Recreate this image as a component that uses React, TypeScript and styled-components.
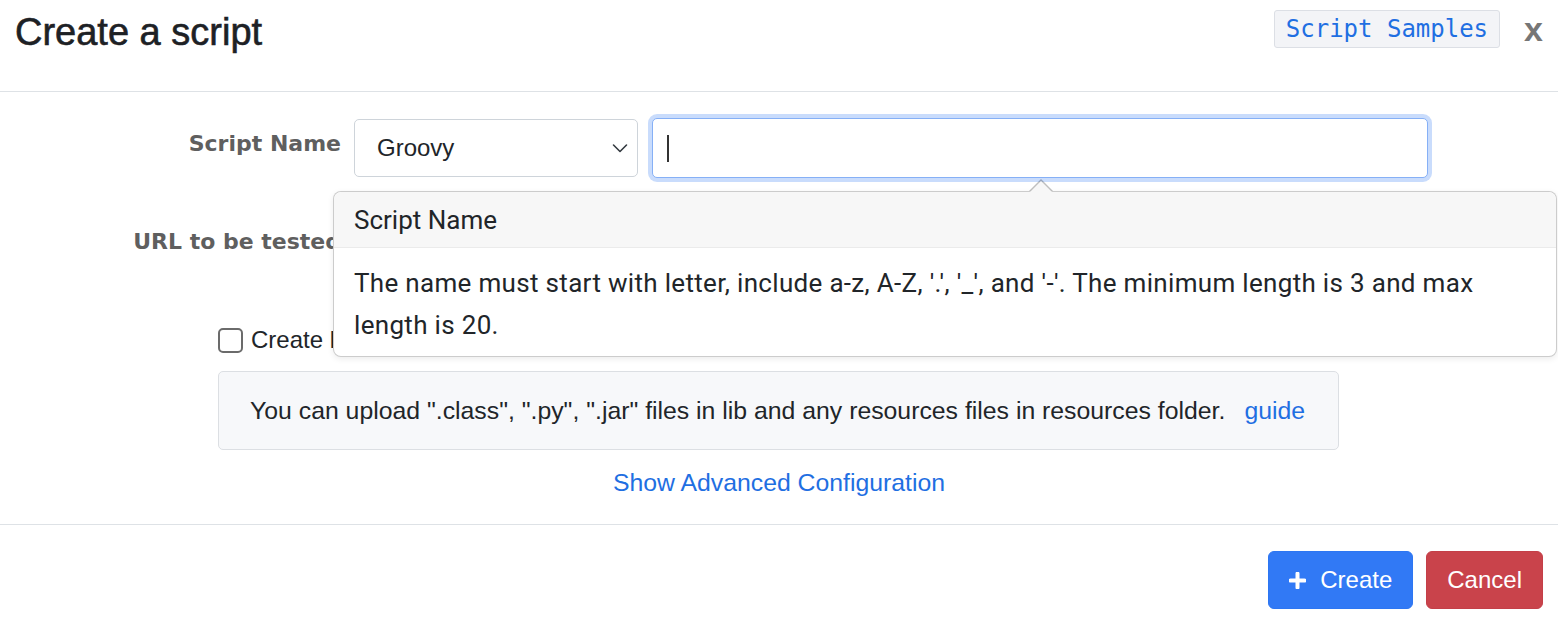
import { FC } from "react";
import styled, { createGlobalStyle } from "styled-components";

const GlobalStyle = createGlobalStyle`
  html, body {
    margin: 0;
    padding: 0;
    background: #fff;
  }
  body {
    font-family: "Liberation Sans", Arial, sans-serif;
    color: #212529;
  }
  * {
    box-sizing: border-box;
  }
`;

const ModalStyled = styled.div`
  width: 1558px;
  height: 622px;
  display: flex;
  flex-direction: column;
  background: #fff;
  overflow: hidden;
`;

const HeaderStyled = styled.header`
  height: 92px;
  flex: 0 0 92px;
  display: flex;
  align-items: flex-start;
  padding: 0 15px;
  border-bottom: 1px solid #dee2e6;

  & .title {
    margin: 10px 0 0;
    font-size: 38px;
    line-height: 44px;
    font-weight: 500;
    color: #1d2125;
    -webkit-text-stroke: 0.6px #1d2125;
    flex: 1;
  }
`;

const SamplesButton = styled.button`
  margin-top: 10px;
  height: 38px;
  padding: 0 11px;
  background: #f3f4f7;
  border: 1px solid #dcdfe5;
  border-radius: 3px;
  font-family: "DejaVu Sans Mono", "Liberation Mono", monospace;
  font-size: 24px;
  color: #1f6fe2;
  cursor: pointer;
`;

const CloseButton = styled.button`
  margin: 9px 0 0 24px;
  padding: 0;
  border: none;
  background: none;
  font-family: "Liberation Sans", Arial, sans-serif;
  font-weight: 700;
  font-size: 34px;
  line-height: 40px;
  color: #767676;
  cursor: pointer;
`;

const BodyStyled = styled.div`
  height: 433px;
  flex: 0 0 433px;
  display: flex;
  flex-direction: column;
  padding-top: 26px;
  border-bottom: 1px solid #dee2e6;
`;

const FormRow = styled.div<{ $top?: number }>`
  position: relative;
  display: flex;
  align-items: center;
  gap: 13px;
  height: 60px;
  margin-top: ${(p) => p.$top ?? 0}px;
`;

const Label = styled.label`
  flex: 0 0 341px;
  margin-bottom: 10px;
  text-align: right;
  font-family: "DejaVu Sans", Verdana, sans-serif;
  font-weight: 700;
  font-size: 22px;
  color: #5f5f5f;
  white-space: nowrap;
`;

const SelectBox = styled.div`
  width: 284px;
  height: 58px;
  display: flex;
  align-items: center;
  justify-content: space-between;
  padding: 0 8px 0 22px;
  border: 1px solid #ced4da;
  border-radius: 5px;
  font-size: 24px;
  color: #212529;
  background: #fff;
`;

const TextInput = styled.div<{ $focused?: boolean; $width: number }>`
  width: ${(p) => p.$width}px;
  height: 60px;
  margin-left: 1px;
  display: flex;
  align-items: center;
  padding: 0 14px;
  border: 1.5px solid ${(p) => (p.$focused ? "#86b0f6" : "#ced4da")};
  border-radius: 5px;
  background: #fff;
  box-shadow: ${(p) => (p.$focused ? "0 0 0 4px rgba(60, 130, 245, 0.28)" : "none")};

  & .caret {
    width: 2px;
    height: 27px;
    background: #333;
  }
`;

const Popover = styled.div`
  position: absolute;
  top: 73px;
  left: 333px;
  width: 1224px;
  background: #fff;
  border: 1px solid rgba(0, 0, 0, 0.2);
  border-radius: 8px;
  box-shadow: 0 2px 6px rgba(0, 0, 0, 0.08);
  font-family: Roboto, "Liberation Sans", sans-serif;
  color: #212529;
  z-index: 10;

  &::before,
  &::after {
    content: "";
    position: absolute;
    left: 695px;
    border-style: solid;
    border-color: transparent;
    border-width: 0 12px 12px 12px;
  }
  &::before {
    top: -13px;
    border-bottom-color: rgba(0, 0, 0, 0.25);
  }
  &::after {
    top: -11.5px;
    border-bottom-color: #f7f7f7;
  }

  & .head {
    height: 56px;
    display: flex;
    align-items: center;
    padding: 0 20px;
    background: #f7f7f7;
    border-bottom: 1px solid #ebebeb;
    border-radius: 8px 8px 0 0;
    font-size: 26px;
  }

  & .content {
    padding: 14px 20px 10px;
    font-size: 26px;
    line-height: 42px;
    letter-spacing: 0.32px;
  }
`;

const CheckRow = styled.label`
  display: flex;
  align-items: center;
  gap: 8px;
  margin: 49px 0 0 218px;
  height: 30px;
  font-size: 24px;
  color: #212529;

  & .box {
    width: 25px;
    height: 25px;
    border: 2px solid #6b6b6b;
    border-radius: 5px;
    background: #fff;
  }
`;

const InfoBox = styled.div`
  margin: 16px 0 0 218px;
  width: 1121px;
  height: 79px;
  display: flex;
  align-items: center;
  padding: 0 31px;
  background: #f7f8fa;
  border: 1px solid #dcdfe3;
  border-radius: 5px;
  font-size: 24.8px;
  color: #212529;

  & a {
    margin-left: 19px;
  }
`;

const LinkText = styled.a`
  color: #1f6fe2;
  text-decoration: none;
  cursor: pointer;
`;

const AdvancedLink = styled(LinkText)`
  align-self: center;
  margin-top: 18px;
  font-size: 24.8px;
  line-height: 30px;
`;

const FooterStyled = styled.footer`
  display: flex;
  justify-content: flex-end;
  gap: 13px;
  padding: 26px 15px 0;
`;

const Button = styled.button<{ $variant: "primary" | "danger" }>`
  height: 58px;
  display: flex;
  align-items: center;
  gap: 14px;
  padding: 0 20px;
  border: 1px solid ${(p) => (p.$variant === "primary" ? "#2d76f2" : "#c43f48")};
  border-radius: 6px;
  background: ${(p) => (p.$variant === "primary" ? "#3179f5" : "#c9434b")};
  color: #fff;
  font-family: "Liberation Sans", Arial, sans-serif;
  font-size: 24px;
  cursor: pointer;
`;

const PlusIcon: FC = () => (
  <svg width="17" height="17" viewBox="0 0 17 17">
    <path d="M6.5 1.5a2 2 0 0 1 4 0V6.5h5a2 2 0 0 1 0 4h-5v5a2 2 0 0 1-4 0v-5h-5a2 2 0 0 1 0-4h5z" fill="#fff" />
  </svg>
);

const Chevron: FC = () => (
  <svg width="18" height="18" viewBox="0 0 18 18">
    <path d="M2.5 6l6.5 6.5L15.5 6" fill="none" stroke="#343a40" strokeWidth="1.6" strokeLinecap="round" strokeLinejoin="round" />
  </svg>
);

const App: FC = () => {
  return (
    <>
      <GlobalStyle />
      <ModalStyled>
        <HeaderStyled>
          <h5 className="title">Create a script</h5>
          <SamplesButton>Script Samples</SamplesButton>
          <CloseButton>x</CloseButton>
        </HeaderStyled>

        <BodyStyled>
          <FormRow>
            <Label>Script Name</Label>
            <SelectBox>
              <span>Groovy</span>
              <Chevron />
            </SelectBox>
            <TextInput $focused $width={776}>
              <span className="caret" />
            </TextInput>

            <Popover>
              <div className="head">Script Name</div>
              <div className="content">
                The name must start with letter, include a-z, A-Z, '.', '_', and '-'. The minimum length is 3 and max
                length is 20.
              </div>
            </Popover>
          </FormRow>

          <FormRow $top={38}>
            <Label>URL to be tested</Label>
            <TextInput $width={1074} />
          </FormRow>

          <CheckRow>
            <span className="box" />
            Create lib and resources folders
          </CheckRow>

          <InfoBox>
            You can upload ".class", ".py", ".jar" files in lib and any resources files in resources folder.
            <LinkText>guide</LinkText>
          </InfoBox>

          <AdvancedLink>Show Advanced Configuration</AdvancedLink>
        </BodyStyled>

        <FooterStyled>
          <Button $variant="primary">
            <PlusIcon />
            Create
          </Button>
          <Button $variant="danger">Cancel</Button>
        </FooterStyled>
      </ModalStyled>
    </>
  );
};

export default App;
